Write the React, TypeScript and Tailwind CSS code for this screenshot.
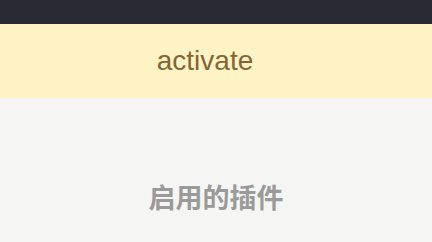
import React from "react";

export default function App() {
  return (
    <div className="w-[432px] h-[242px] bg-[#f5f5f4] flex flex-col overflow-hidden" style={{ fontFamily: '"Liberation Sans", "Noto Sans CJK SC", sans-serif' }}>
      <div className="h-[24px] bg-[#292b33] shrink-0" />
      <div className="h-[74px] bg-[#fef3c4] flex items-center justify-center shrink-0">
        <span className="text-[28px] text-[#836636] leading-none pr-[22px]">activate</span>
      </div>
      <div className="flex-1 flex items-center justify-center pt-[64px] pb-[12px]">
        <span className="text-[27px] font-bold text-[#9a9a9a] leading-none" style={{ fontFamily: '"Noto Sans CJK SC", sans-serif' }}>启用的插件</span>
      </div>
    </div>
  );
}
